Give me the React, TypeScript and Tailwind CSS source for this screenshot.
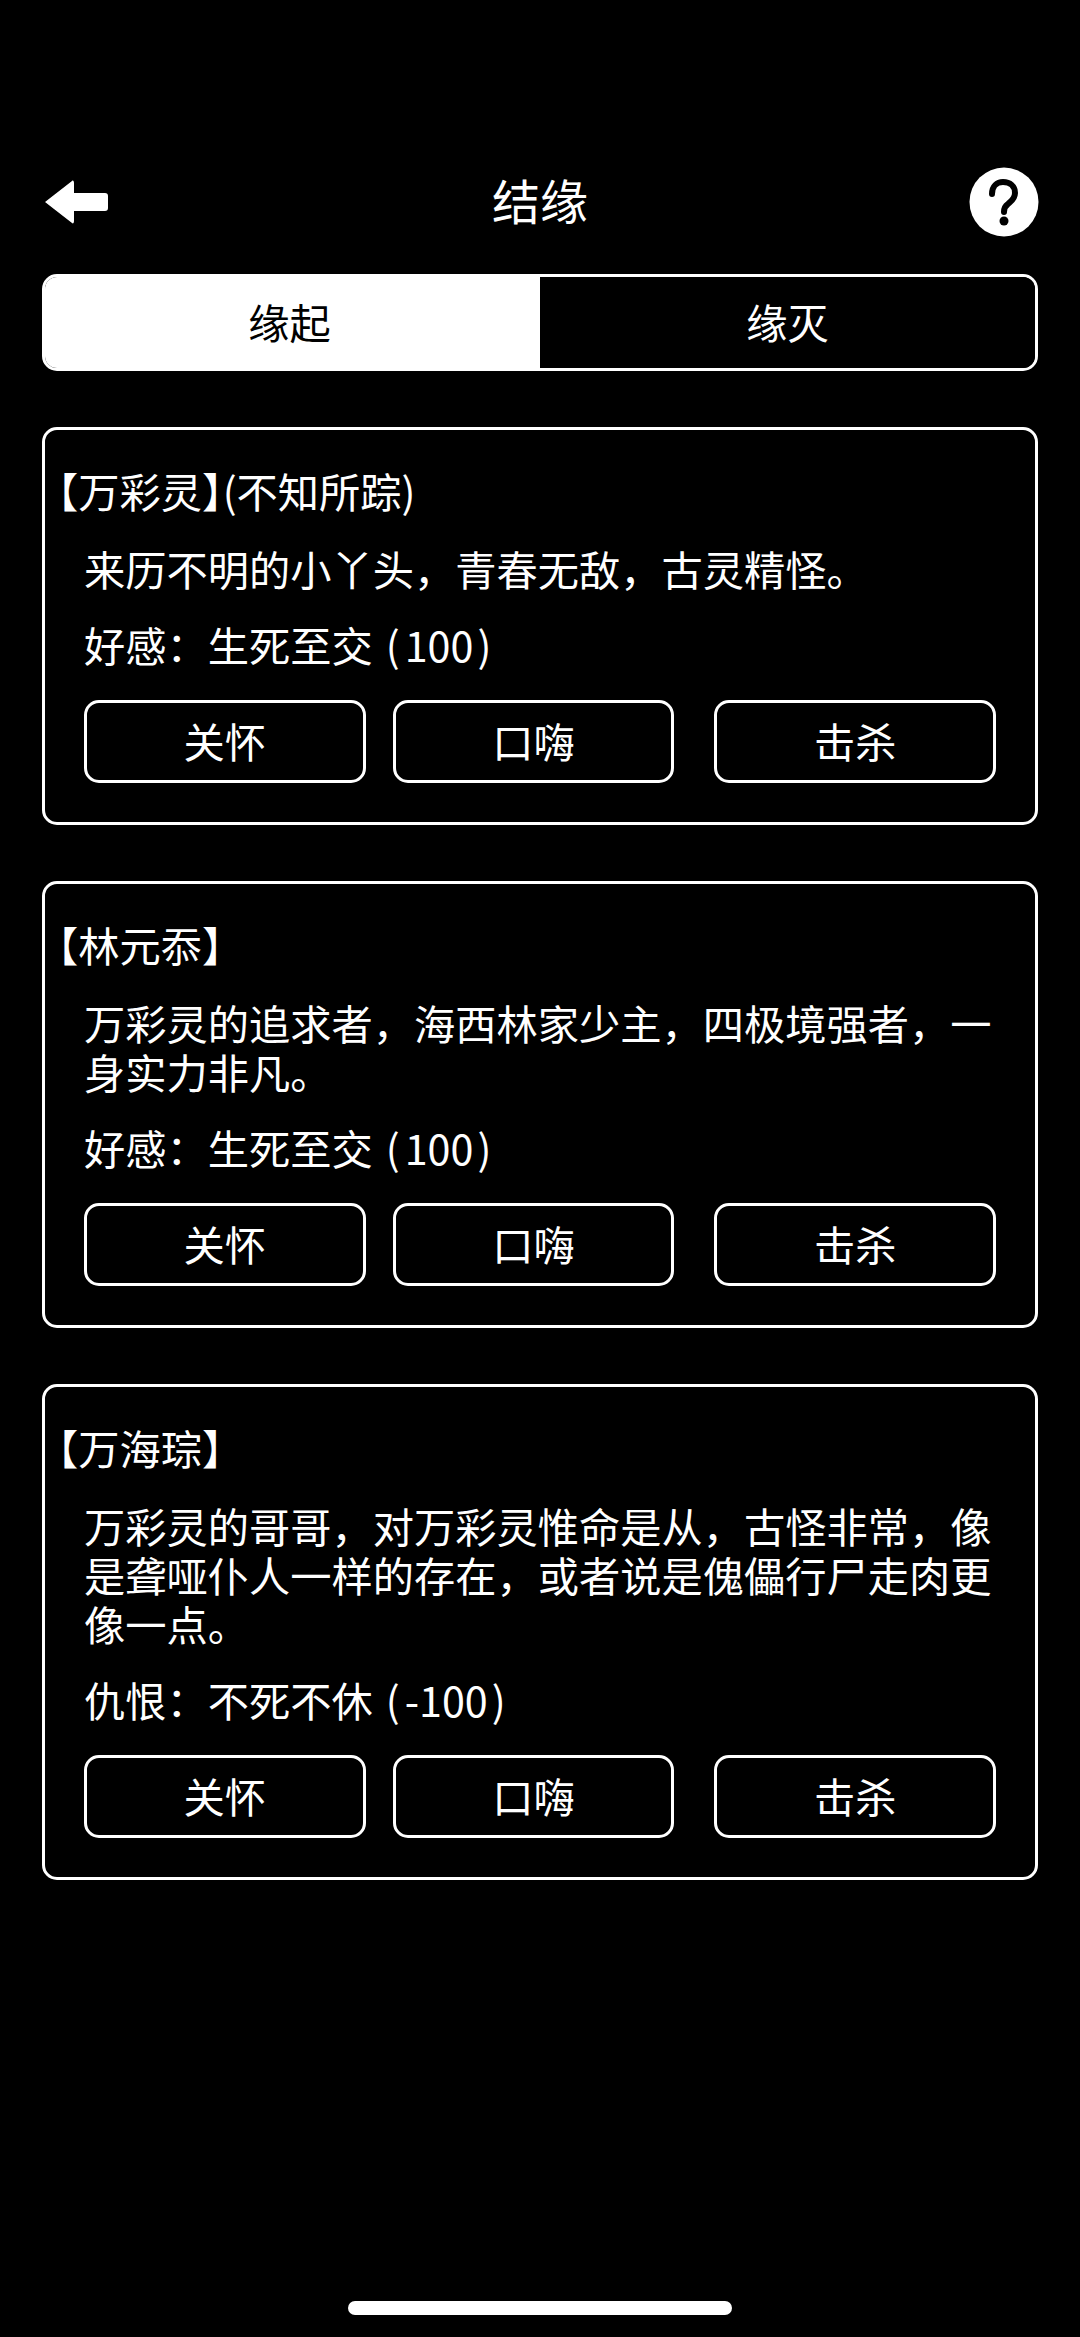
const FONT = "font-['Noto_Sans_CJK_SC','Noto_Sans',sans-serif]";

type Person = { name: string; note?: string; desc: string; label: string; tier: string; value: string };
const people: Person[] = [
  { name: "【万彩灵", note: "(不知所踪)", desc: "来历不明的小丫头，青春无敌，古灵精怪。", label: "好感：", tier: "生死至交", value: "100" },
  { name: "【林元忝", desc: "万彩灵的追求者，海西林家少主，四极境强者，一身实力非凡。", label: "好感：", tier: "生死至交", value: "100" },
  { name: "【万海琮", desc: "万彩灵的哥哥，对万彩灵惟命是从，古怪非常，像是聋哑仆人一样的存在，或者说是傀儡行尸走肉更像一点。", label: "仇恨：", tier: "不死不休", value: "-100" },
];

function ActionButton({ label, className }: { label: string; className?: string }) {
  return (
    <button className={`w-[282px] h-[83px] rounded-[15px] border-[3px] border-white flex items-center justify-center text-white ${className ?? ""}`}>
      <span className="text-[41.25px] leading-[50px] pb-[4px]">{label}</span>
    </button>
  );
}

function Card({ p }: { p: Person }) {
  return (
    <div className="border-[3px] border-white rounded-[15px] pt-[35px] pb-[39px] px-[39px]">
      <div className="text-[41.25px] leading-[50px] -ml-[47px] text-white h-[50px] whitespace-nowrap">
        {p.name}
        <span className="[font-feature-settings:'halt']">】</span>
        {p.note}
      </div>
      <div className="text-[41.25px] leading-[49px] text-white mt-[29px]">{p.desc}</div>
      <div className="text-[41.25px] leading-[50px] text-white mt-[26px] whitespace-nowrap">
        {p.label}
        {p.tier}
        <span className="ml-[13px] mr-[5px]">(</span>
        {p.value}
        <span className="ml-[4px]">)</span>
      </div>
      <div className="flex mt-[31px]">
        <ActionButton label="关怀" />
        <ActionButton label="口嗨" className="ml-[27px]" />
        <ActionButton label="击杀" className="ml-[40px]" />
      </div>
    </div>
  );
}

export default function App() {
  return (
    <div className={`bg-black h-[2337px] flex flex-col px-[42px] text-white ${FONT}`}>
      <div className="relative h-[96px] mt-[154px] flex items-center justify-between">
        <svg width="66" height="46" viewBox="0 0 66 46" className="ml-[3px] mt-[1px]">
          <path d="M0 22 L27 1 C28 0 29 1 29 3 V13 H60 C62 13 63 14 63 16 V28 C63 30 62 31 60 31 H29 V41 C29 43 28 44 27 43 Z" fill="#fff" />
        </svg>
        <div className="text-[48px] leading-[60px] pb-[6px] absolute left-0 right-0 text-center">结缘</div>
        <svg width="70" height="70" viewBox="0 0 70 70" className="-mr-[1px]">
          <circle cx="35" cy="35" r="34.500" fill="#fff" />
          <path d="M23 27 C23 19 28 15 34 15 C41 15 46 19 46 26 C46 32 42 34 39 37 C36 39 35 41 35 45" fill="none" stroke="#000" strokeWidth="6" strokeLinecap="round" />
          <circle cx="35" cy="54" r="4.500" fill="#000" />
        </svg>
      </div>
      <div className="mt-[24px] h-[97px] flex border-[3px] border-white rounded-[15px] overflow-hidden">
        <div className="w-1/2 bg-white text-black flex items-center justify-center pr-[6px]">
          <span className="text-[41.25px] leading-[50px] pb-[3px]">缘起</span>
        </div>
        <div className="w-1/2 bg-black text-white flex items-center justify-center">
          <span className="text-[41.25px] leading-[50px] pb-[3px]">缘灭</span>
        </div>
      </div>
      <div className="mt-[56px] flex flex-col gap-[56px]">
        {people.map((p) => (
          <Card key={p.name} p={p} />
        ))}
      </div>
      <div className="mt-auto mb-[22px] ml-[306px] w-[384px] h-[14px] rounded-full bg-white" />
    </div>
  );
}
